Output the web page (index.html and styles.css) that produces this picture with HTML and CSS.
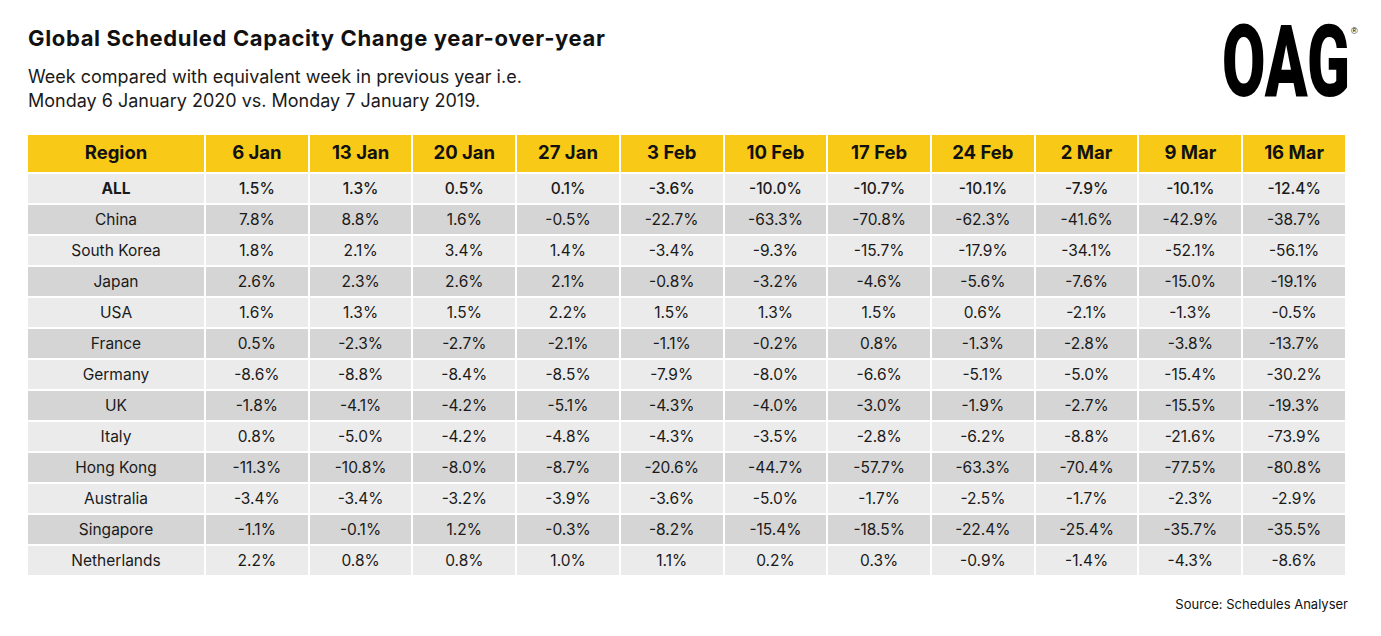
FILE: index.html
```html
<!DOCTYPE html>
<html lang="en">
<head>
<meta charset="utf-8">
<title>Global Scheduled Capacity Change year-over-year</title>
<link rel="stylesheet" href="styles.css">
</head>
<body>
<div class="page">
  <header class="top">
    <div class="heading">
      <h1 class="title">Global Scheduled Capacity Change year-over-year</h1>
      <p class="subtitle">Week compared with equivalent week in previous year i.e.<br>Monday 6 January 2020 vs. Monday 7 January 2019.</p>
    </div>
    <div class="logo"><span class="logo-text">OAG</span><span class="logo-reg">®</span></div>
  </header>
  <table class="data">
    <thead>
      <tr><th class="region">Region</th><th>6 Jan</th><th>13 Jan</th><th>20 Jan</th><th>27 Jan</th><th>3 Feb</th><th>10 Feb</th><th>17 Feb</th><th>24 Feb</th><th>2 Mar</th><th>9 Mar</th><th>16 Mar</th></tr>
    </thead>
    <tbody>
      <tr class="all"><td>ALL</td><td>1.5%</td><td>1.3%</td><td>0.5%</td><td>0.1%</td><td>-3.6%</td><td>-10.0%</td><td>-10.7%</td><td>-10.1%</td><td>-7.9%</td><td>-10.1%</td><td>-12.4%</td></tr>
      <tr><td>China</td><td>7.8%</td><td>8.8%</td><td>1.6%</td><td>-0.5%</td><td>-22.7%</td><td>-63.3%</td><td>-70.8%</td><td>-62.3%</td><td>-41.6%</td><td>-42.9%</td><td>-38.7%</td></tr>
      <tr><td>South Korea</td><td>1.8%</td><td>2.1%</td><td>3.4%</td><td>1.4%</td><td>-3.4%</td><td>-9.3%</td><td>-15.7%</td><td>-17.9%</td><td>-34.1%</td><td>-52.1%</td><td>-56.1%</td></tr>
      <tr><td>Japan</td><td>2.6%</td><td>2.3%</td><td>2.6%</td><td>2.1%</td><td>-0.8%</td><td>-3.2%</td><td>-4.6%</td><td>-5.6%</td><td>-7.6%</td><td>-15.0%</td><td>-19.1%</td></tr>
      <tr><td>USA</td><td>1.6%</td><td>1.3%</td><td>1.5%</td><td>2.2%</td><td>1.5%</td><td>1.3%</td><td>1.5%</td><td>0.6%</td><td>-2.1%</td><td>-1.3%</td><td>-0.5%</td></tr>
      <tr><td>France</td><td>0.5%</td><td>-2.3%</td><td>-2.7%</td><td>-2.1%</td><td>-1.1%</td><td>-0.2%</td><td>0.8%</td><td>-1.3%</td><td>-2.8%</td><td>-3.8%</td><td>-13.7%</td></tr>
      <tr><td>Germany</td><td>-8.6%</td><td>-8.8%</td><td>-8.4%</td><td>-8.5%</td><td>-7.9%</td><td>-8.0%</td><td>-6.6%</td><td>-5.1%</td><td>-5.0%</td><td>-15.4%</td><td>-30.2%</td></tr>
      <tr><td>UK</td><td>-1.8%</td><td>-4.1%</td><td>-4.2%</td><td>-5.1%</td><td>-4.3%</td><td>-4.0%</td><td>-3.0%</td><td>-1.9%</td><td>-2.7%</td><td>-15.5%</td><td>-19.3%</td></tr>
      <tr><td>Italy</td><td>0.8%</td><td>-5.0%</td><td>-4.2%</td><td>-4.8%</td><td>-4.3%</td><td>-3.5%</td><td>-2.8%</td><td>-6.2%</td><td>-8.8%</td><td>-21.6%</td><td>-73.9%</td></tr>
      <tr><td>Hong Kong</td><td>-11.3%</td><td>-10.8%</td><td>-8.0%</td><td>-8.7%</td><td>-20.6%</td><td>-44.7%</td><td>-57.7%</td><td>-63.3%</td><td>-70.4%</td><td>-77.5%</td><td>-80.8%</td></tr>
      <tr><td>Australia</td><td>-3.4%</td><td>-3.4%</td><td>-3.2%</td><td>-3.9%</td><td>-3.6%</td><td>-5.0%</td><td>-1.7%</td><td>-2.5%</td><td>-1.7%</td><td>-2.3%</td><td>-2.9%</td></tr>
      <tr><td>Singapore</td><td>-1.1%</td><td>-0.1%</td><td>1.2%</td><td>-0.3%</td><td>-8.2%</td><td>-15.4%</td><td>-18.5%</td><td>-22.4%</td><td>-25.4%</td><td>-35.7%</td><td>-35.5%</td></tr>
      <tr><td>Netherlands</td><td>2.2%</td><td>0.8%</td><td>0.8%</td><td>1.0%</td><td>1.1%</td><td>0.2%</td><td>0.3%</td><td>-0.9%</td><td>-1.4%</td><td>-4.3%</td><td>-8.6%</td></tr>
    </tbody>
  </table>
  <p class="source">Source: Schedules Analyser</p>
</div>
</body>
</html>
```

FILE: styles.css
```css
* { box-sizing: border-box; }
html, body { margin: 0; padding: 0; background: #ffffff; }
body {
  font-family: "Inter", "Liberation Sans", sans-serif;
  color: #111111;
  width: 1381px;
  height: 636px;
  overflow: hidden;
}
.page {
  padding: 24px 36px 0 28px;
}
.top {
  display: flex;
  justify-content: space-between;
  align-items: flex-start;
  height: 109px;
}
.title {
  margin: 0;
  font-size: 22px;
  font-weight: 700;
  line-height: 28px;
  letter-spacing: 0.65px;
  color: #111;
}
.subtitle {
  margin: 13px 0 0 0;
  font-size: 18px;
  font-weight: 400;
  line-height: 24px;
  color: #1a1a1a;
}
.logo {
  position: relative;
  margin-top: -2px;
  margin-right: -13px;
  width: 136px;
  height: 80px;
}
.logo-text {
  display: inline-block;
  font-family: "Roboto", "Liberation Sans", sans-serif;
  font-weight: 900;
  font-size: 100px;
  line-height: 80px;
  color: #000;
  transform: scaleX(0.63);
  transform-origin: left top;
  white-space: nowrap;
}
.logo-reg {
  position: absolute;
  top: 5px;
  left: 129px;
  font-family: "Liberation Sans", sans-serif;
  font-size: 9px;
  line-height: 9px;
  color: #000;
}
.data {
  width: 1321px;
  border-collapse: collapse;
  table-layout: fixed;
  margin-left: -2px;
}
.data th, .data td {
  border: 2px solid #ffffff;
  text-align: center;
  padding: 0;
  white-space: nowrap;
}
.data th {
  background: #f8c916;
  height: 39px;
  padding-bottom: 3px;
  font-size: 18.5px;
  font-weight: 700;
  color: #111;
}
.data th.region { width: 178px; }
.data td {
  height: 31px;
  font-size: 15.5px;
  font-weight: 400;
  color: #1a1a1a;
}
.data tbody tr:nth-child(odd) td { background: #ebebeb; }
.data tbody tr:nth-child(even) td { background: #d5d5d5; }
.data tr.all td { font-weight: 700; }
.data tr.all td:not(:first-child) { font-weight: 500; }
.source {
  margin: 19px -3px 0 0;
  text-align: right;
  font-size: 13px;
  color: #111;
}
```
